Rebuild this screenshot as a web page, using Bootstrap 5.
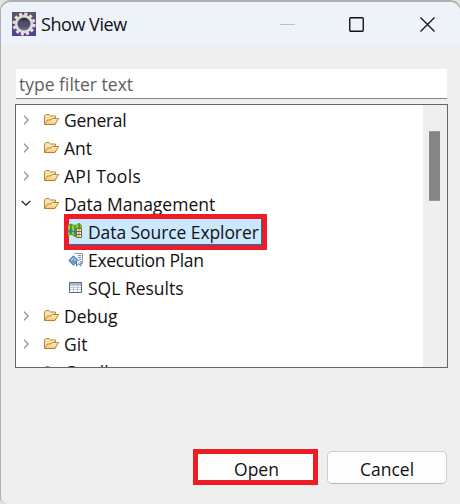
<!DOCTYPE html>
<html lang="en">
<head>
<meta charset="utf-8">
<title>Show View</title>
<link href="https://cdn.jsdelivr.net/npm/bootstrap@5.3.0/dist/css/bootstrap.min.css" rel="stylesheet">
<style>
html,body{height:504px;overflow:hidden}
body{background:#e3e3e3;font-family:"Open Sans","Noto Sans",sans-serif;font-size:17.5px;line-height:28px;color:#111;white-space:nowrap}
svg{display:block;flex:none}
.dialog{height:504px;width:461px;background:#efefef;border:solid #b0b0b0;border-width:2px 1px 0 1px;border-radius:11px 11px 0 7px;overflow:hidden}
.titlebar{height:44px;background:#edf3f9;padding-left:11px}
.title-text{font-size:18px;letter-spacing:-.45px;margin-left:5px;color:#111}
.win-buttons{margin-left:auto;padding-right:25px}
.win-buttons svg:nth-child(2){margin:0 56px 0 54px}
.filter{margin:23px 12px 0 15px;height:30px;border:0;border-bottom:1px solid #858585;border-radius:0;background:#fff;padding:0 0 0 3px;font-size:17.5px;color:#222;width:431px;line-height:29px}
.filter::placeholder{color:#606060;opacity:1}
.tree{margin:5px 0 0 14px;width:433px;height:264px;border:1px solid #666;background:#fff;overflow:hidden}
.tree-rows{padding-top:1px}
.tree-row{height:28px;padding-left:5px}
.tree-row .chev{margin-right:12px}
.tree-row .folder{margin-right:5px}
.leaf{padding-left:52px}
.leaf svg{margin-right:4px}
.snug{letter-spacing:-.28px}
.snug-sm{letter-spacing:-.08px}
.airy{letter-spacing:.28px}
.picked{height:36px;width:203px;margin:-4px 0 -4px 48px;border:5px solid #ee1c24;background:#cce8ff;position:relative;box-shadow:inset -1px -1px #0078d7;line-height:26px}
.picked svg{margin:0 5px 2px -1px}
.track{width:24px;background:#efefef;padding:26px 7px 0 6px}
.thumb{height:70px;background:#858585;border:solid #9a9a9a;border-width:1px 0}
.actions{margin:81px 13px 0 0;gap:9px}
.act{padding:0;border-radius:5px;background:#fdfdfd;border:1px solid #cdcdcd;border-bottom-color:#b8b8b8;width:120px;height:33px;font-size:17.5px;line-height:34px;color:#111;margin-top:2px}
.act-open{width:125px;height:36px;border:5px solid #ee1c24;border-radius:0;margin:0;line-height:31px;padding-left:2px}
</style>
<script src="https://cdn.jsdelivr.net/npm/bootstrap@5.3.0/dist/js/bootstrap.bundle.min.js"></script>
</head>
<body>
<svg width="0" height="0" class="position-absolute">
<defs>
<linearGradient id="gold" x2="0" y2="1"><stop stop-color="#fff5cf"/><stop offset="1" stop-color="#f2c775"/></linearGradient>
<symbol id="folder" viewBox="0 0 16 14"><path d="M1.500 11.500V3L3 1.500h3L7.500 3h5v3" fill="#fae3ac" stroke="#c08336"/><path d="M1.500 11.500L4.500 7H8l1.500-1.500h6L12 11.500z" fill="url(#gold)" stroke="#bd7c2c" stroke-linejoin="round"/></symbol>
<symbol id="closed" viewBox="0 0 10 10"><path d="M3 .7L7.200 5 3 9.300" fill="none" stroke="#858585" stroke-width="1.100"/></symbol>
</defs></svg>
<main class="dialog d-flex flex-column">
  <header class="titlebar d-flex align-items-center">
    <svg width="24" height="24" viewBox="0 0 24 24"><defs><linearGradient id="pl" x2="0" y2="1"><stop stop-color="#5d5567"/><stop offset="1" stop-color="#5a3b96"/></linearGradient><linearGradient id="hub" x2="0" y2="1"><stop stop-color="#29263a"/><stop offset=".55" stop-color="#4b4868"/><stop offset="1" stop-color="#8078a0"/></linearGradient></defs><path fill="url(#pl)" d="M0 0h24v24H0z"/><circle cx="12" cy="12" r="10" fill="none" stroke="#e6e4dd" stroke-width="3" stroke-dasharray="3 2.236"/><circle cx="12" cy="12" r="7.900" fill="url(#hub)" stroke="#dedbd5" stroke-width="2.800"/><path d="M6.500 10h11M6 12h12" stroke="#6d698a" stroke-width=".6"/></svg>
    <span class="title-text">Show View</span>
    <div class="win-buttons d-flex align-items-center">
      <svg width="15" height="15"><path d="M0 7.500h15" stroke="#bcc1c7"/></svg>
      <svg width="15" height="15"><rect x=".75" y=".75" width="13.500" height="13.500" rx="1" fill="none" stroke="#111" stroke-width="1.400"/></svg>
      <svg width="15" height="15"><path d="M.5.5l14 14M14.500.5l-14 14" stroke="#111" stroke-width="1.300"/></svg>
    </div>
  </header>
  <input class="filter form-control flex-shrink-0" placeholder="type filter text">
  <section class="tree d-flex flex-shrink-0">
    <div class="tree-rows flex-grow-1">
      <div class="tree-row d-flex align-items-center"><svg class="chev" width="10" height="10"><use href="#closed"/></svg><svg class="folder" width="16" height="14"><use href="#folder"/></svg><span class="snug">General</span></div>
      <div class="tree-row d-flex align-items-center"><svg class="chev" width="10" height="10"><use href="#closed"/></svg><svg class="folder" width="16" height="14"><use href="#folder"/></svg><span>Ant</span></div>
      <div class="tree-row d-flex align-items-center"><svg class="chev" width="10" height="10"><use href="#closed"/></svg><svg class="folder" width="16" height="14"><use href="#folder"/></svg><span class="airy">API Tools</span></div>
      <div class="tree-row d-flex align-items-center"><svg class="chev" width="10" height="10"><path d="M.7 2L5 6.200 9.300 2" fill="none" stroke="#222" stroke-width="1.200"/></svg><svg class="folder" width="16" height="14"><use href="#folder"/></svg><span>Data Management</span></div>
      <div class="picked d-flex align-items-center">
        <svg width="15" height="16" viewBox="0 0 15 16"><path d="M0 2l3-1.500L7 2l4-2 3 2v11l-3-1-4 2-4-2-3 1z" fill="#73b834"/><path d="M3 1v11M7 2v12M11 0v6" stroke="#397c20"/><path d="M1 3v8M5 3v8M9 2v5" stroke="#b1dd4c" stroke-width="1.300"/><path d="M0 7l3-1 2 2 3-1v3L4 9 1 10z" fill="#2785a7"/><path d="M8.500 5.500h5v9h-5z" fill="#f4edce" stroke="#79643d"/><path d="M9 8.500h4M9 11.500h4" stroke="#79643d"/><path d="M10 7h2M10 10h2M10 13h2" stroke="#b39c67"/></svg>
        <span class="snug-sm">Data Source Explorer</span>
      </div>
      <div class="tree-row leaf d-flex align-items-center"><svg width="16" height="16" viewBox="0 0 16 16"><path d="M6.500 1.500h8v10h-4" fill="#f6f8fc" stroke="#8d9ab0"/><path d="M10 3.500h3M10 5.500h3M11 7.500h2" stroke="#6f94c8"/><path d="M.8 8.500L5.500 3.800 10.200 8.500 5.500 13.200z" fill="#6e9ecb" stroke="#45729f"/><path d="M3 8.500l2.500-2.400L8 8.500" fill="none" stroke="#c4def0"/><path d="M8.500 9v5l2.200-2 2.300 2V9" fill="#dce8f4" stroke="#597da3"/></svg><span class="snug">Execution Plan</span></div>
      <div class="tree-row leaf d-flex align-items-center"><svg width="16" height="14" viewBox="0 0 16 14"><path d="M1.500 1.500h12v10h-12z" fill="#fff" stroke="#596979"/><path d="M2 2h11v2H2z" fill="#a9bacb"/><path d="M2 4.500h11M2 6.500h11M2 8.500h11M5.500 2v9M9.500 2v9" stroke="#b3c1cd" stroke-width=".8"/></svg><span>SQL Results</span></div>
      <div class="tree-row d-flex align-items-center"><svg class="chev" width="10" height="10"><use href="#closed"/></svg><svg class="folder" width="16" height="14"><use href="#folder"/></svg><span>Debug</span></div>
      <div class="tree-row d-flex align-items-center"><svg class="chev" width="10" height="10"><use href="#closed"/></svg><svg class="folder" width="16" height="14"><use href="#folder"/></svg><span>Git</span></div>
      <div class="tree-row d-flex align-items-center"><svg class="chev" width="10" height="10"><use href="#closed"/></svg><svg class="folder" width="16" height="14"><use href="#folder"/></svg><span>Gradle</span></div>
    </div>
    <div class="track"><div class="thumb"></div></div>
  </section>
  <footer class="actions d-flex justify-content-end">
    <button class="btn act act-open">Open</button>
    <button class="btn act">Cancel</button>
  </footer>
</main>
</body>
</html>
